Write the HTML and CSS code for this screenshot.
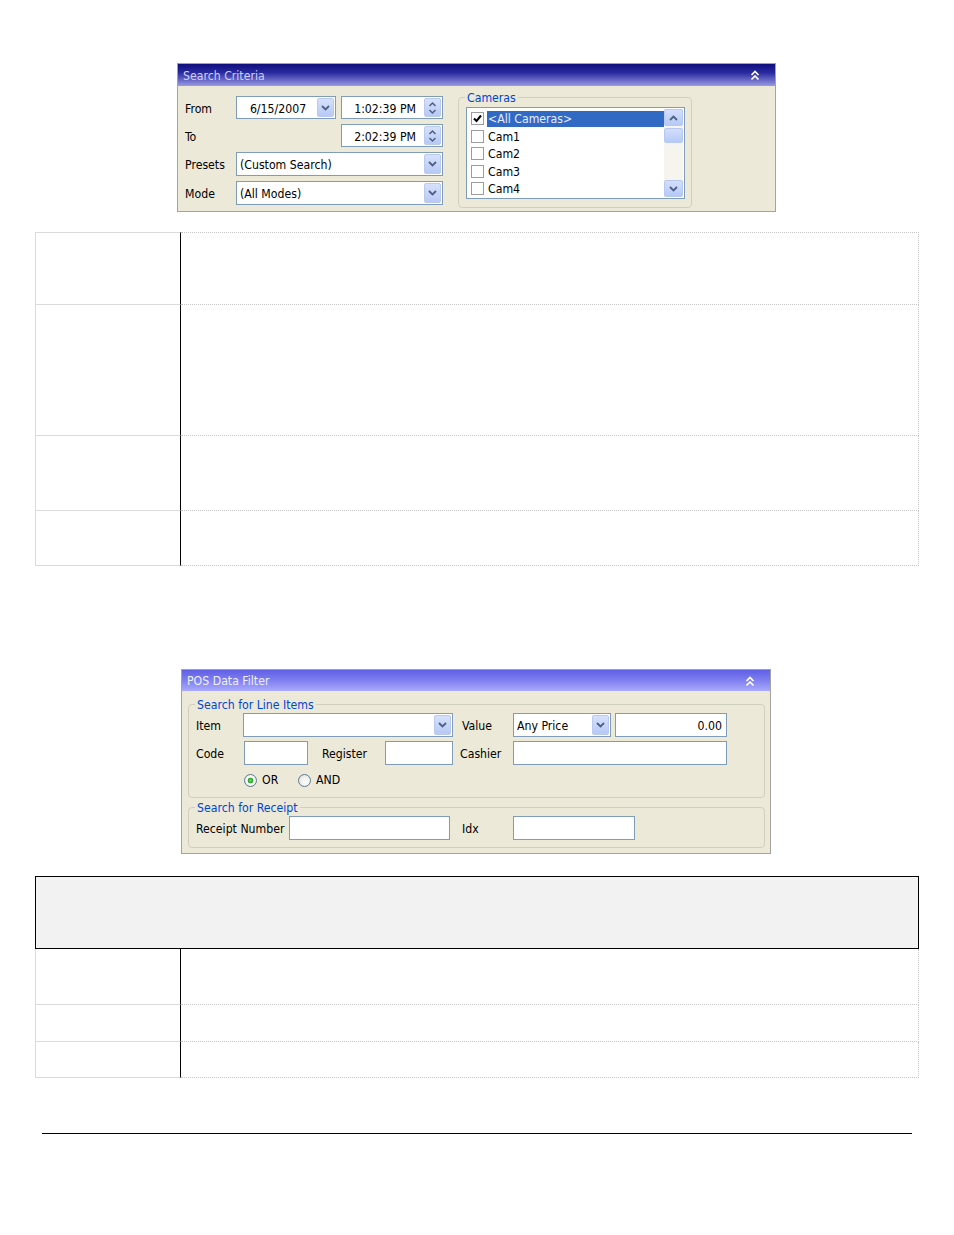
FILE: index.html
```html
<!DOCTYPE html>
<html lang="en">
<head>
    <meta charset="UTF-8">
    <title>Search Criteria / POS Data Filter</title>
    <link rel="stylesheet" href="styles.css">
</head>
<body>

<div class="panel criteria">
    <div class="title dark">
        <span>Search Criteria</span>
        <svg class="collapse" width="10" height="11" viewBox="0 0 10 11"><path d="M1.5 5 L5 1.5 L8.5 5 M1.5 9.5 L5 6 L8.5 9.5" /></svg>
    </div>
    <div class="panel-body">
        <div class="form">
            <span class="label">From</span>
            <div class="combo date">
                <span class="value">6/15/2007</span>
                <span class="drop"><svg width="9" height="6" viewBox="0 0 9 6"><path d="M1 1 L4.5 4.5 L8 1" /></svg></span>
            </div>
            <div class="combo time">
                <span class="value">1:02:39 PM</span>
                <span class="spin"><svg width="9" height="14" viewBox="0 0 9 14"><path d="M1.5 5 L4.5 2 L7.5 5 M1.5 9 L4.5 12 L7.5 9" /></svg></span>
            </div>

            <span class="label">To</span>
            <span></span>
            <div class="combo time">
                <span class="value">2:02:39 PM</span>
                <span class="spin"><svg width="9" height="14" viewBox="0 0 9 14"><path d="M1.5 5 L4.5 2 L7.5 5 M1.5 9 L4.5 12 L7.5 9" /></svg></span>
            </div>

            <span class="label">Presets</span>
            <div class="combo wide">
                <span class="value">(Custom Search)</span>
                <span class="drop"><svg width="9" height="6" viewBox="0 0 9 6"><path d="M1 1 L4.5 4.5 L8 1" /></svg></span>
            </div>

            <span class="label">Mode</span>
            <div class="combo wide">
                <span class="value">(All Modes)</span>
                <span class="drop"><svg width="9" height="6" viewBox="0 0 9 6"><path d="M1 1 L4.5 4.5 L8 1" /></svg></span>
            </div>
        </div>

        <fieldset class="group cameras">
            <legend>Cameras</legend>
            <div class="listbox">
                <ul class="items">
                    <li class="selected"><span class="check"><svg width="9" height="9" viewBox="0 0 9 9"><path d="M1 4.5 L3.5 7 L8 1.5" /></svg></span><span class="name">&lt;All Cameras&gt;</span></li>
                    <li><span class="check"></span><span class="name">Cam1</span></li>
                    <li><span class="check"></span><span class="name">Cam2</span></li>
                    <li><span class="check"></span><span class="name">Cam3</span></li>
                    <li><span class="check"></span><span class="name">Cam4</span></li>
                </ul>
                <div class="scrollbar">
                    <span class="sbtn"><svg width="9" height="6" viewBox="0 0 9 6"><path d="M1 5 L4.5 1.5 L8 5" /></svg></span>
                    <span class="thumb"></span>
                    <span class="track"></span>
                    <span class="sbtn"><svg width="9" height="6" viewBox="0 0 9 6"><path d="M1 1 L4.5 4.5 L8 1" /></svg></span>
                </div>
            </div>
        </fieldset>
    </div>
</div>

<table class="doc first">
    <colgroup><col class="keycol"><col></colgroup>
    <tr class="r73"><td class="key"></td><td class="val"></td></tr>
    <tr class="r131"><td class="key"></td><td class="val"></td></tr>
    <tr class="r75"><td class="key"></td><td class="val"></td></tr>
    <tr class="r55"><td class="key"></td><td class="val"></td></tr>
</table>

<div class="panel pos">
    <div class="title light">
        <span>POS Data Filter</span>
        <svg class="collapse" width="10" height="11" viewBox="0 0 10 11"><path d="M1.5 5 L5 1.5 L8.5 5 M1.5 9.5 L5 6 L8.5 9.5" /></svg>
    </div>
    <div class="panel-body stack">
        <fieldset class="group lines">
            <legend>Search for Line Items</legend>
            <div class="row">
                <span class="lbl w47">Item</span>
                <div class="combo item">
                    <span class="value"></span>
                    <span class="drop"><svg width="9" height="6" viewBox="0 0 9 6"><path d="M1 1 L4.5 4.5 L8 1" /></svg></span>
                </div>
                <span class="lbl w60 p9">Value</span>
                <div class="combo price">
                    <span class="value">Any Price</span>
                    <span class="drop"><svg width="9" height="6" viewBox="0 0 9 6"><path d="M1 1 L4.5 4.5 L8 1" /></svg></span>
                </div>
                <span class="box amount">0.00</span>
            </div>
            <div class="row second">
                <span class="lbl w48">Code</span>
                <span class="box w64"></span>
                <span class="lbl w77 p14">Register</span>
                <span class="box w68"></span>
                <span class="lbl w60 p7">Cashier</span>
                <span class="box w214"></span>
            </div>
            <div class="row radios">
                <span class="radio on"><span class="dot"></span>OR</span>
                <span class="radio"><span class="dot"></span>AND</span>
            </div>
        </fieldset>

        <fieldset class="group receipt">
            <legend>Search for Receipt</legend>
            <div class="row">
                <span class="lbl w93">Receipt Number</span>
                <span class="box w161"></span>
                <span class="lbl w63 p12">Idx</span>
                <span class="box w122"></span>
            </div>
        </fieldset>
    </div>
</div>

<table class="doc second">
    <colgroup><col class="keycol"><col></colgroup>
    <tr class="r73"><th class="head" colspan="2"></th></tr>
    <tr class="r56"><td class="key"></td><td class="val"></td></tr>
    <tr class="r37"><td class="key"></td><td class="val"></td></tr>
    <tr class="r36"><td class="key"></td><td class="val"></td></tr>
</table>

<div class="footer"></div>

</body>
</html>
```

FILE: styles.css
```css
*{
    box-sizing: border-box;
}
body{
    margin: 0;
    background-color: #ffffff;
    font-family: "DejaVu Sans Condensed", "DejaVu Sans", sans-serif;
    font-stretch: condensed;
    font-size: 12.2px;
    color: #000000;
}

/* window panels */
.panel{
    border: 1px solid #a3a3a3;
    background-color: #ece9d8;
}
.criteria{
    margin: 63px 0 0 177px;
    width: 599px;
    height: 149px;
}
.pos{
    margin: 103px 0 0 181px;
    width: 590px;
    height: 185px;
}
.title{
    display: flex;
    align-items: center;
    justify-content: space-between;
    height: 22px;
    padding: 1px 15px 0 5px;
}
.title.dark{
    background: linear-gradient(#0e0e7e 0%, #2a2aa0 40%, #9a9ae4 100%);
    color: #cdd0ff;
}
.title.light{
    height: 21px;
    padding-right: 15px;
    background: linear-gradient(#5f5fe4 0%, #8080f0 50%, #aaaafb 100%);
    color: #f0f0ff;
}
.collapse path{
    fill: none;
    stroke: #ffffff;
    stroke-width: 1.7;
}
.panel-body{
    display: flex;
    align-items: flex-start;
    padding: 3px 0 0 7px;
}
.panel-body.stack{
    display: block;
    padding: 5px 0 0 6px;
}

/* search criteria form */
.form{
    display: grid;
    grid-template-columns: 46px 100px 102px;
    grid-template-rows: 23px 23px 24px 24px;
    column-gap: 5px;
    row-gap: 5px;
    margin-top: 7px;
}
.label{
    align-self: center;
    padding-top: 2px;
    white-space: nowrap;
}
.combo{
    display: flex;
    align-items: center;
    background-color: #ffffff;
    border: 1px solid #7f9db9;
}
.combo .value{
    flex: 1;
    padding-left: 3px;
    padding-top: 2px;
    white-space: nowrap;
    overflow: hidden;
}
.date .value{
    text-align: center;
}
.time .value{
    text-align: right;
    padding-right: 7px;
}
.wide{
    grid-column: 2 / 4;
}
.drop, .spin{
    display: flex;
    align-items: center;
    justify-content: center;
    align-self: stretch;
    width: 17px;
    margin: 1px;
    border: 1px solid #b9c9ef;
    border-radius: 2px;
    background: linear-gradient(#d6e1fc, #b7c9f5);
}
.drop path, .spin path, .sbtn path{
    fill: none;
    stroke: #4d6185;
    stroke-width: 1.8;
}
.spin path{
    stroke-width: 1.5;
}

/* group boxes */
.group{
    margin: 0;
    padding: 0;
    min-width: 0;
    border: 1px solid #d0d0bf;
    border-radius: 4px;
}
.group legend{
    margin-left: 6px;
    padding: 2px 2px 0;
    line-height: 15px;
    color: #0046d5;
}
.cameras{
    margin-left: 15px;
    width: 234px;
    height: 119px;
}
.listbox{
    display: flex;
    width: 219px;
    height: 92px;
    margin: 1px 0 0 7px;
    border: 1px solid #7f9db9;
    background-color: #ffffff;
}
.items{
    flex: 1;
    list-style: none;
    margin: 0;
    padding: 2px 0 0 4px;
}
.items li{
    display: flex;
    align-items: center;
    height: 17.5px;
}
.check{
    display: flex;
    align-items: center;
    justify-content: center;
    width: 13px;
    height: 13px;
    margin-right: 3px;
    border: 1px solid #9d9d9d;
    background-color: #ffffff;
}
.check path{
    fill: none;
    stroke: #000000;
    stroke-width: 2;
}
.name{
    display: flex;
    align-items: center;
    flex: 1;
    height: 16px;
    padding-left: 1px;
    padding-top: 1px;
}
.selected .name{
    background-color: #316ac5;
    color: #e6ecff;
}
.scrollbar{
    display: flex;
    flex-direction: column;
    width: 19px;
    margin: 1px 1px 1px 0;
    background-color: #f5f4ee;
}
.sbtn, .thumb{
    display: flex;
    align-items: center;
    justify-content: center;
    height: 17px;
    border: 1px solid #b7c9f3;
    border-radius: 2px;
    background: linear-gradient(#d3defc, #b6c9f6);
}
.thumb{
    height: 15px;
    margin-top: 2px;
}
.track{
    flex: 1;
}

/* pos data filter */
.lines{
    width: 577px;
    padding: 0 0 9px 7px;
}
.receipt{
    width: 577px;
    margin-top: 1px;
    padding: 0 0 7px 7px;
}
.lines legend, .receipt legend{
    margin-left: -1px;
}
.group .row{
    display: flex;
    align-items: center;
    height: 24px;
    margin-bottom: 4px;
}
.group .row:last-child{
    margin-bottom: 0;
}
.row.second{
    margin-bottom: 7px;
}
.row.radios{
    height: 16px;
    padding-left: 48px;
}
.lbl{
    padding-top: 2px;
    white-space: nowrap;
}
.w47{ width: 47px; }
.w48{ width: 48px; }
.w60{ width: 60px; }
.w63{ width: 63px; }
.w77{ width: 77px; }
.w93{ width: 93px; }
.p7{ padding-left: 7px; }
.p9{ padding-left: 9px; }
.p12{ padding-left: 12px; }
.p14{ padding-left: 14px; }
.combo.item{
    width: 210px;
    height: 24px;
}
.combo.price{
    width: 98px;
    height: 24px;
}
.box{
    display: flex;
    align-items: center;
    height: 24px;
    padding-top: 2px;
    border: 1px solid #7f9db9;
    background-color: #ffffff;
}
.amount{
    width: 112px;
    margin-left: 4px;
    justify-content: flex-end;
    padding-right: 4px;
}
.w64{ width: 64px; }
.w68{ width: 68px; }
.w122{ width: 122px; }
.w161{ width: 161px; }
.w214{ width: 214px; }
.radio{
    display: flex;
    align-items: center;
    width: 54px;
}
.dot{
    width: 13px;
    height: 13px;
    margin-right: 5px;
    border: 1px solid #5f7b93;
    border-radius: 50%;
    background: radial-gradient(circle at 60% 60%, #ffffff 0%, #f0efea 50%, #d4d2ca 100%);
}
.radio.on .dot{
    background: radial-gradient(circle, #6fd36f 0, #23a323 2.6px, #ffffff 3.2px, #ecebe5 70%, #d4d2ca 100%);
}

/* document tables */
.doc{
    width: 884px;
    margin-left: 35px;
    border-collapse: separate;
    border-spacing: 0;
    table-layout: fixed;
}
.doc.first{
    margin-top: 20px;
}
.doc.second{
    margin-top: 22px;
}
.keycol{
    width: 146px;
}
.doc td{
    padding: 0;
}
.key{
    border-left: 1px solid #dadada;
    border-right: 1px solid #000000;
    border-bottom: 1px solid #dadada;
}
.val{
    border-right: 1px dotted #c6c6c6;
    border-bottom: 1px dotted #c6c6c6;
}
.first tr:first-child .key{
    border-top: 1px solid #dadada;
}
.first tr:first-child .val{
    border-top: 1px dotted #c6c6c6;
}
.head{
    border: 1px solid #000000;
    background-color: #f2f2f2;
}
.r36{ height: 36px; }
.r37{ height: 37px; }
.r55{ height: 55px; }
.r56{ height: 56px; }
.r73{ height: 73px; }
.r75{ height: 75px; }
.r131{ height: 131px; }

.footer{
    width: 870px;
    margin: 55px 0 0 42px;
    border-top: 1px solid #000000;
}
```
